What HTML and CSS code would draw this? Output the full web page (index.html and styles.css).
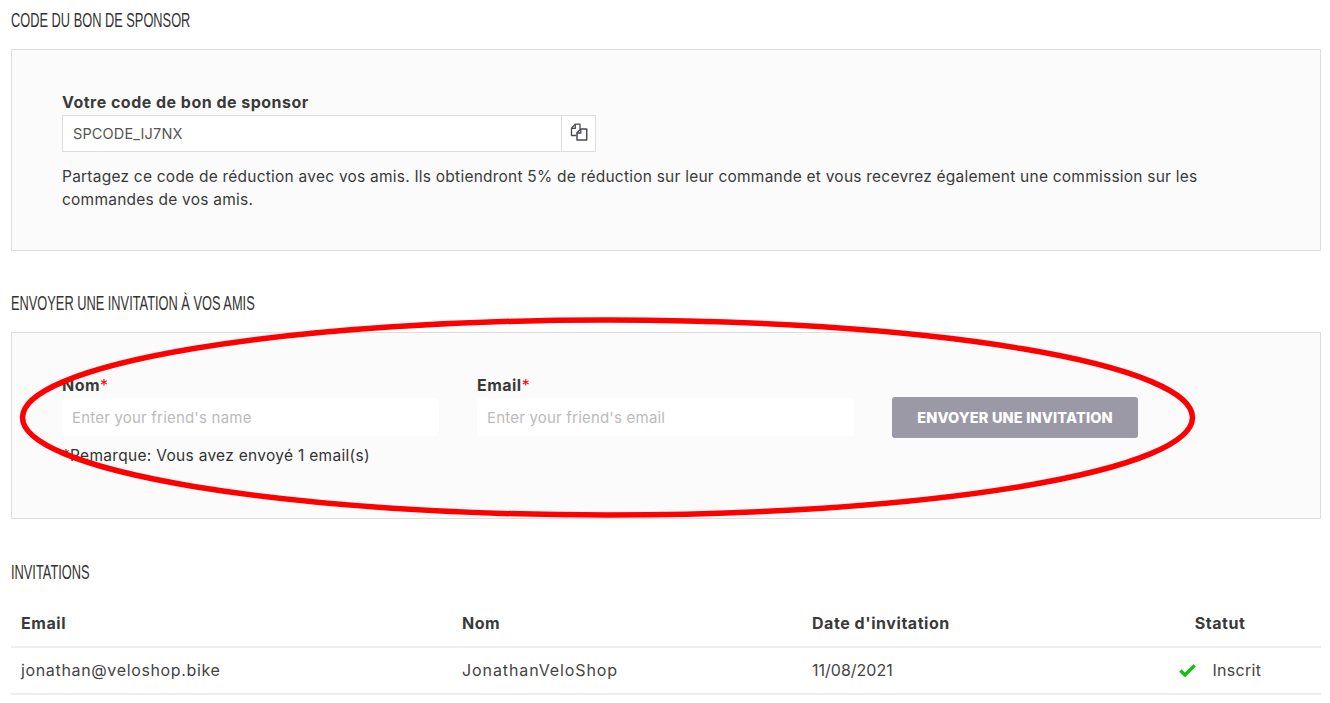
FILE: index.html
```html
<!DOCTYPE html>
<html lang="fr">
<head>
<meta charset="utf-8">
<title>Code du bon de sponsor</title>
<link rel="stylesheet" href="styles.css">
</head>
<body>
<main class="page">
  <h2 class="title title-first">CODE DU BON DE SPONSOR</h2>
  <section class="box box-code">
    <label class="label">Votre code de bon de sponsor</label>
    <div class="input-group">
      <input class="code-input" type="text" value="SPCODE_IJ7NX" readonly>
      <button class="copy-btn" type="button" aria-label="Copier">
        <svg class="copy-icon" width="18" height="18" viewBox="0 0 18 18" fill="none" stroke="#4a4a55" stroke-width="1.3" stroke-linejoin="round">
          <path d="M6.5 12.5H1.5V5.2L5.2 1.2H10V6"/>
          <path d="M1.5 5.4h3.8V1.4"/>
          <path d="M7 17V9.8L10.7 6h6V17z" stroke-width="1.5"/>
          <path d="M7 10h3.8V6.2"/>
        </svg>
      </button>
    </div>
    <p class="help">Partagez ce code de réduction avec vos amis. Ils obtiendront 5% de réduction sur leur commande et vous recevrez également une commission sur les commandes de vos amis.</p>
  </section>

  <h2 class="title title-next">ENVOYER UNE INVITATION À VOS AMIS</h2>
  <section class="box box-form">
    <div class="form-row">
      <div class="field">
        <label class="label">Nom<span class="req">*</span></label>
        <input class="text-input" type="text" placeholder="Enter your friend's name">
      </div>
      <div class="field">
        <label class="label">Email<span class="req">*</span></label>
        <input class="text-input" type="text" placeholder="Enter your friend's email">
      </div>
      <button class="send-btn" type="button">ENVOYER UNE INVITATION</button>
    </div>
    <p class="note">*Remarque: Vous avez envoyé 1 email(s)</p>
  </section>

  <h2 class="title title-table">INVITATIONS</h2>
  <table class="table">
    <colgroup>
      <col class="col-email"><col class="col-name"><col class="col-date"><col class="col-status">
    </colgroup>
    <thead>
      <tr><th>Email</th><th>Nom</th><th>Date d'invitation</th><th class="center">Statut</th></tr>
    </thead>
    <tbody>
      <tr>
        <td>jonathan@veloshop.bike</td>
        <td class="cell-name">JonathanVeloShop</td>
        <td class="cell-date">11/08/2021</td>
        <td class="center cell-status">
          <svg class="check" width="17" height="13" viewBox="0 0 17 13" fill="none" stroke="#0fc10f" stroke-width="3.4"><path d="M1.4 6.6l4.6 4.4L15.6 1.4"/></svg>
          <span>Inscrit</span>
        </td>
      </tr>
    </tbody>
  </table>

  <svg class="scribble" width="1330" height="703" viewBox="0 0 1330 703" fill="none" aria-hidden="true">
    <ellipse cx="607.5" cy="417.5" rx="585" ry="97.5" stroke="#ff0000" stroke-width="5.5"/>
  </svg>
</main>
</body>
</html>
```
FILE: styles.css
```css
* { box-sizing: border-box; }
html, body { margin: 0; padding: 0; background: #fff; }
body {
  height: 703px;
  overflow: hidden;
  font-family: Inter, "Noto Sans", sans-serif;
  font-size: 15.5px;
  color: #3f3f3f;
}
.page { position: relative; padding: 0 9px 0 11px; }
.title {
  margin: 0;
  font-family: "Liberation Sans", sans-serif;
  font-size: 21px;
  font-weight: 400;
  line-height: 22px;
  color: #333;
  transform: scaleX(0.61);
  transform-origin: left center;
}
.title-first { padding-top: 9px; height: 49px; }
.title-next { padding-top: 41px; height: 81px; }
.title-table { padding-top: 42px; height: 81px; }
.box { background: #fbfbfb; border: 1px solid #ddd; padding: 0 50px; }
.box-code { height: 202px; padding-top: 41px; }
.box-form { height: 187px; padding-top: 41px; }
.label {
  display: block;
  font-size: 16px;
  font-weight: 700;
  letter-spacing: 0.48px;
  line-height: 22px;
  padding-bottom: 2px;
  color: #3a3a3a;
}
.input-group { display: flex; width: 534px; height: 37px; margin-bottom: 13px; }
.code-input {
  flex: 1;
  min-width: 0;
  height: 37px;
  border: 1px solid #ddd;
  background: #fff;
  padding: 0 10px;
  font: 400 14.5px Inter, sans-serif;
  letter-spacing: 0.15px;
  color: #555;
}
.copy-btn {
  display: flex;
  align-items: center;
  justify-content: center;
  width: 34px;
  height: 37px;
  padding: 0 0 3px;
  background: #fff;
  border: 1px solid #ddd;
  border-left: 0;
}
.help { margin: 0; font-size: 15.5px; line-height: 23px; color: #3a3a3a; letter-spacing: 0.23px; }
.form-row { display: flex; align-items: flex-start; }
.field { width: 377px; margin-right: 38px; }
.text-input {
  display: block;
  width: 100%;
  height: 38px;
  border: 0;
  border-radius: 4px;
  background: #fff;
  padding: 0 10px;
  font: 400 15px Inter, sans-serif;
  letter-spacing: 0.2px;
}
.text-input::placeholder { color: #bbb; opacity: 1; }
.req { color: #ff0000; font-weight: 400; }
.send-btn {
  width: 246px;
  height: 41px;
  margin-top: 23px;
  border: 0;
  border-radius: 3px;
  background: #9b99a6;
  color: #fff;
  font: 800 14.5px Inter, sans-serif;
  letter-spacing: 0.15px;
}
.note { margin: 6px 0 0; font-size: 15.5px; line-height: 23px; color: #333; letter-spacing: 0.3px; }
.table { width: 1310px; border-collapse: collapse; table-layout: fixed; }
.col-email { width: 441px; }
.col-name { width: 350px; }
.col-date { width: 317px; }
.col-status { width: 202px; }
.table th {
  height: 47px;
  padding: 0 10px;
  text-align: left;
  font-weight: 700;
  font-size: 16px;
  letter-spacing: 0.55px;
  border-bottom: 2px solid #eee;
  color: #3a3a3a;
}
.table td {
  height: 47px;
  padding: 0 10px 2px;
  font-size: 16px;
  letter-spacing: 0.65px;
  border-bottom: 2px solid #eee;
  color: #444;
}
.table .center { text-align: center; }
.table .cell-name { letter-spacing: 0.9px; }
.table .cell-date { letter-spacing: 0; }
.table .cell-status { letter-spacing: 0.3px; }
.check { margin-right: 12px; vertical-align: -1px; }
.scribble { position: absolute; left: 0; top: 0; pointer-events: none; }
```
